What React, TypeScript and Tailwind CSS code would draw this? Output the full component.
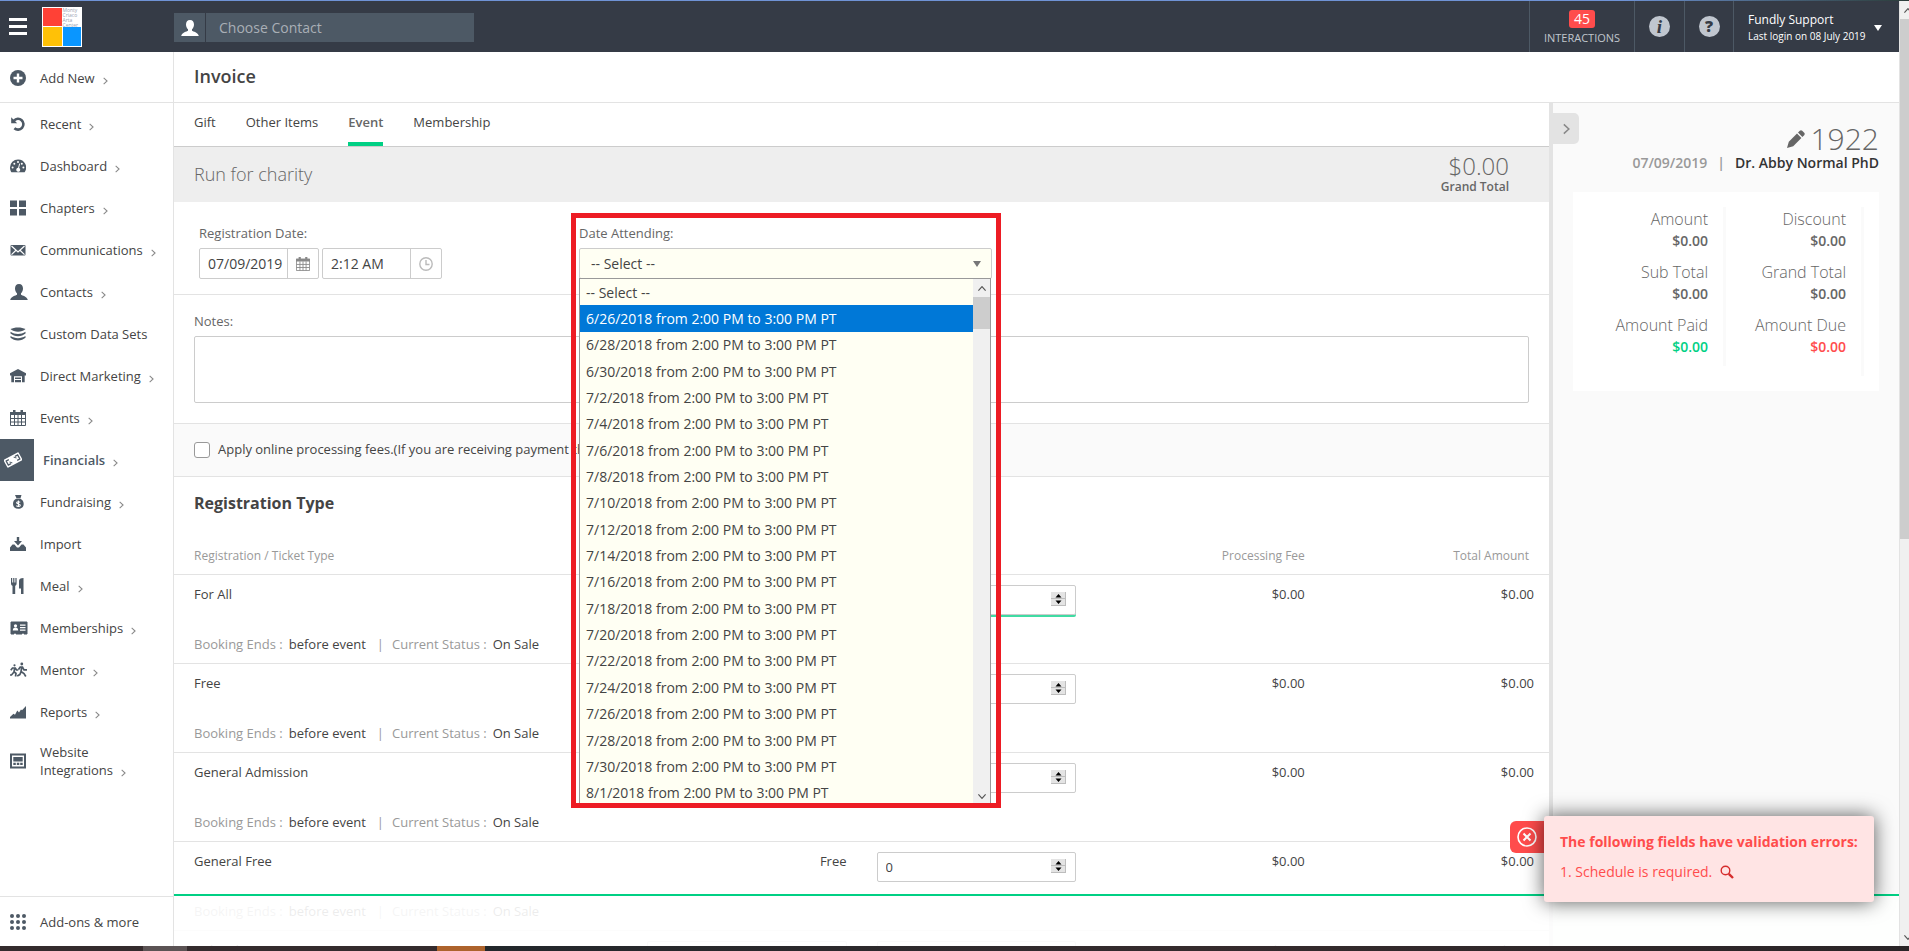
import type { ReactNode } from "react";

type NavItem = {
  label: string;
  icon: ReactNode;
  arrow?: boolean;
  active?: boolean;
};

const NAV_ITEMS: NavItem[] = [
  { label: "Recent", icon: <RecentIcon />, arrow: true },
  { label: "Dashboard", icon: <DashboardIcon />, arrow: true },
  { label: "Chapters", icon: <ChaptersIcon />, arrow: true },
  { label: "Communications", icon: <MailIcon />, arrow: true },
  { label: "Contacts", icon: <PersonIcon className="size-[18px]" />, arrow: true },
  { label: "Custom Data Sets", icon: <LayersIcon /> },
  { label: "Direct Marketing", icon: <HouseIcon />, arrow: true },
  { label: "Events", icon: <CalendarIcon className="size-4" />, arrow: true },
  { label: "Financials", icon: <CashIcon />, arrow: true, active: true },
  { label: "Fundraising", icon: <MoneyBagIcon />, arrow: true },
  { label: "Import", icon: <ImportIcon /> },
  { label: "Meal", icon: <MealIcon />, arrow: true },
  { label: "Memberships", icon: <CardIcon />, arrow: true },
  { label: "Mentor", icon: <MentorIcon />, arrow: true },
  { label: "Reports", icon: <ReportsIcon />, arrow: true },
  { label: "Website Integrations", icon: <WebsiteIcon />, arrow: true },
];

const TABS = ["Gift", "Other Items", "Event", "Membership"];

const SCHEDULE_DAYS = [
  "6/26", "6/28", "6/30", "7/2", "7/4", "7/6", "7/8", "7/10", "7/12", "7/14",
  "7/16", "7/18", "7/20", "7/22", "7/24", "7/26", "7/28", "7/30", "8/1",
];

const TICKETS = [
  { name: "For All", focused: true },
  { name: "Free" },
  { name: "General Admission" },
  { name: "General Free", price: "Free" },
  { name: "Kids Admission", editablePrice: true },
];

const TOTALS = [
  [
    { label: "Amount", color: "text-[#666666]" },
    { label: "Sub Total", color: "text-[#666666]" },
    { label: "Amount Paid", color: "text-[#00d084]" },
  ],
  [
    { label: "Discount", color: "text-[#666666]" },
    { label: "Grand Total", color: "text-[#666666]" },
    { label: "Amount Due", color: "text-[#ff4c4c]" },
  ],
];

function RecentIcon() {
  return (
    <svg viewBox="0 0 16 16" className="size-4" fill="none" stroke="currentColor">
      <path d="M4 4.600A5.400 5.400 0 1 1 4.400 12.200" strokeWidth="2.600" />
      <path d="M1.200 1.200v6h6z" fill="currentColor" stroke="none" />
    </svg>
  );
}

function DashboardIcon() {
  return (
    <svg viewBox="0 0 16 16" className="size-4">
      <path d="M8 1.500a8 8 0 0 0-8 8c0 1.800.5 3.400 1.400 4.700h13.200A8 8 0 0 0 8 1.500z" fill="currentColor" />
      <g fill="#fff">
        <circle cx="2.600" cy="9.600" r="1" />
        <circle cx="4.300" cy="5.700" r="1" />
        <circle cx="8" cy="4" r="1" />
        <circle cx="11.800" cy="5.700" r="1" />
        <circle cx="13.400" cy="9.600" r="1" />
        <path d="M9.200 5.500 10.100 5.800 9.100 10a2 2 0 1 1-1-.2z" />
      </g>
    </svg>
  );
}

function ChaptersIcon() {
  return (
    <svg viewBox="0 0 16 16" className="size-4" fill="currentColor">
      <path d="M0 .5h7v6.500H0zM9 .5h7v6.500H9zM0 9h7v6.500H0zM9 9h7v6.500H9z" />
    </svg>
  );
}

function MailIcon() {
  return (
    <svg viewBox="0 0 16 16" className="size-4">
      <rect x="0.500" y="3" width="15" height="10.500" rx="1" fill="currentColor" />
      <path d="M1.500 4 8 10l6.500-6M1.500 12.600 6 8.300M14.500 12.600 10 8.300" fill="none" stroke="#fff" strokeWidth="1.200" />
    </svg>
  );
}

function PersonIcon({ className }: { className: string }) {
  return (
    <svg viewBox="0 0 18 18" className={className} fill="currentColor">
      <path d="M9 1c2.700 0 4 1.900 4 4.400 0 2-.9 3.800-2 4.800v1.500c1.200 1 6 1.500 6.800 5.300H.2C1 13.200 5.800 12.700 7 11.700v-1.500c-1.100-1-2-2.800-2-4.800C5 2.900 6.300 1 9 1z" />
    </svg>
  );
}

function LayersIcon() {
  return (
    <svg viewBox="0 0 16 16" className="size-4" fill="currentColor">
      <path d="M8 1.500c3 0 5.500.6 7.500 1.600C13.500 4.800 11 5.800 8 5.800S2.500 4.800.5 3.100C2.500 2.100 5 1.500 8 1.500z" />
      <path d="M.5 5.800C3 7.200 5.200 8 8 8s5-.8 7.500-2.200v1.800C13.500 9.200 11 10.200 8 10.200S2.500 9.200.5 7.600zM.5 10C3 11.400 5.200 12.200 8 12.200s5-.8 7.500-2.200v1.800c-2 1.600-4.500 2.600-7.500 2.600S2.500 13.400.5 11.800z" />
    </svg>
  );
}

function HouseIcon() {
  return (
    <svg viewBox="0 0 16 16" className="size-4" fill="currentColor">
      <path d="M8 1 16 5.200V7.500h-1.300v6.700H12V8.300H4v5.900H1.300V7.500H0V5.200z" />
      <path d="M5 9.500h6v1.500H5zM5 12h6v2.200H5z" />
    </svg>
  );
}

function CalendarIcon({ className }: { className: string }) {
  return (
    <svg viewBox="0 0 16 16" className={className}>
      <path d="M.5 2.500h15v13H.5z" fill="none" stroke="currentColor" />
      <path d="M0 2h16v3H0zM3 0h2.500v3H3zM10.500 0H13v3h-2.500z" fill="currentColor" />
      <path d="M4.500 5v10.500M8 5v10.500M11.500 5v10.500M.5 8.500h15M.5 12h15" stroke="currentColor" />
    </svg>
  );
}

function CashIcon() {
  return (
    <svg viewBox="0 0 18 16" className="h-4 w-[18px]">
      <g transform="rotate(-28 9 8)">
        <rect x="0.500" y="3.500" width="17" height="9" rx="1" fill="#fff" />
        <path d="M5.500 5.700H2.500v4.600h3M12.500 5.700h3v4.600h-3" fill="none" stroke="#4d5965" strokeWidth="1.300" />
        <path d="M7 10.300 5 8M11 5.700 13 8" fill="none" stroke="#4d5965" />
      </g>
    </svg>
  );
}

function MoneyBagIcon() {
  return (
    <svg viewBox="0 0 16 16" className="size-4">
      <path d="M5 1h6.500l-1 3.200h-4zM6 4.800h4.500c2 1 3.200 2.800 3.200 5.200 0 3.200-2.200 4.800-5.400 4.800S3 13.200 3 10c0-2.400 1-4.200 3-5.200z" fill="currentColor" />
      <path d="M10.200 8.300C9.500 7.500 6.600 7.400 6.600 8.800c0 1.600 3.700.8 3.700 2.400 0 1.500-3.100 1.400-3.900.4M8.400 6.600v6.400" fill="none" stroke="#fff" strokeWidth="1.100" />
    </svg>
  );
}

function ImportIcon() {
  return (
    <svg viewBox="0 0 16 16" className="size-4" fill="currentColor">
      <path d="M6.800 1h2.400v4H12L8 9.400 4 5h2.800z" />
      <path d="M2.500 8.500h2L7 11.500h2l2.500-3h2l2.500 3V15H0v-3.500z" />
    </svg>
  );
}

function MealIcon() {
  return (
    <svg viewBox="0 0 16 16" className="size-4" fill="currentColor">
      <path d="M1 0h1.200v4.500h1V0h1.200v4.500h1V0h1.200v5.500c0 1.200-.6 2-1.400 2.300V16H2.500V7.800C1.600 7.500 1 6.700 1 5.500zM9 3c0-2 1.300-3 4.500-3v16H11v-5.500H9z" />
    </svg>
  );
}

function CardIcon() {
  return (
    <svg viewBox="0 0 18 14" className="h-3.5 w-[18px]">
      <path d="M1 1h16v12h-3v-1h-2v1H6v-1H4v1H1z" fill="currentColor" stroke="currentColor" strokeLinejoin="round" />
      <circle cx="5.500" cy="4.800" r="1.600" fill="#fff" />
      <path d="M2.800 9.500c0-2 1-3 2.700-3s2.700 1 2.700 3zM10 3.500h5.500v1.200H10zM10 6h5.500v1.200H10zM10 8.500h5.500v1.200H10z" fill="#fff" />
    </svg>
  );
}

function MentorIcon() {
  return (
    <svg viewBox="0 0 18 16" className="h-4 w-[18px]" fill="none" stroke="currentColor" strokeWidth="1.700">
      <circle cx="4.500" cy="3.300" r="1.100" fill="currentColor" stroke="none" />
      <circle cx="11.800" cy="2" r="1.400" fill="currentColor" stroke="none" />
      <path d="M.8 8.300 2.500 6h2.800l1.200 2h1.800M4.600 6.500 4 9.800l2 1.500-.5 3.200M4 10 1.500 13H0M8.500 7.500l1.700-2.500h2.300l1.500 2.800h3M11.700 5.500 11 9.500l3 2 1.800 3M11 9.800l-1.200 2.800-2.600 1.400" />
    </svg>
  );
}

function ReportsIcon() {
  return (
    <svg viewBox="0 0 16 16" className="size-4" fill="currentColor">
      <path d="M0 14.500V13l3.500-3.200 1.500 1L7.300 6.500l1.700 2 2-3 1 .8L16 2v12.500z" />
    </svg>
  );
}

function WebsiteIcon() {
  return (
    <svg viewBox="0 0 16 16" className="size-4" fill="currentColor">
      <path d="M0 .5h16v15H0zM2 2.500v11h12v-11z" fillRule="evenodd" />
      <path d="M3.300 4h9.400v4.500H3.300zM3.300 9.700h2.500v2.300H3.300zM6.800 9.700h2.500v2.300H6.800zM10.200 9.700h2.500v2.300h-2.500z" />
    </svg>
  );
}

function Chevron({ className }: { className: string }) {
  return (
    <svg viewBox="0 0 6 10" className={className} fill="none" stroke="currentColor">
      <path d="M.7 1 5 5 .7 9" strokeWidth="1.300" />
    </svg>
  );
}

function Header() {
  return (
    <header className="flex h-[51px] shrink-0 items-stretch bg-[#353b46] text-white">
      <div className="flex w-[174px] shrink-0 items-center gap-[15px] pl-[9px]">
        <button type="button" aria-label="Menu" className="flex w-[18px] flex-col gap-1">
          <span className="h-[3px] bg-white" />
          <span className="h-[3px] bg-white" />
          <span className="h-[3px] bg-white" />
        </button>
        <div className="grid size-10 grid-cols-2 grid-rows-2 gap-px bg-white p-px">
          <span className="bg-[#ff4136]" />
          <span className="text-[5px] leading-[5px] text-gray-400">
            Monty
            <br />
            Criaco
            <br />
            Arta
            <br />
            Center
          </span>
          <span className="bg-[#ffc107]" />
          <span className="bg-[#0a96ff]" />
        </div>
      </div>
      <div className="mt-3 flex h-[29px] w-[300px] gap-px">
        <span className="flex w-[31px] items-center justify-center bg-[#4d5965]">
          <PersonIcon className="size-[18px]" />
        </span>
        <input
          type="text"
          aria-label="Choose Contact"
          placeholder="Choose Contact"
          className="min-w-0 flex-1 bg-[#4d5965] px-[13px] text-[14px] outline-none placeholder:text-[#a9afb6]"
        />
      </div>
      <div className="ml-auto flex">
        <button type="button" className="flex w-[105px] flex-col items-center border-l border-[#4d5965] pt-[9px]">
          <span className="rounded-[3px] bg-[#ff4c4c] px-[5px] text-[14px] leading-[18px]">45</span>
          <span className="text-[11px] leading-[20px] text-[#c0c6cd]">INTERACTIONS</span>
        </button>
        <button
          type="button"
          aria-label="Information"
          className="flex w-[50px] items-center justify-center border-l border-[#4d5965]"
        >
          <span className="size-[21px] rounded-full bg-[#c0c6cf] font-['Liberation_Serif'] text-[19px] leading-[21px] font-bold text-[#353b46] italic">
            i
          </span>
        </button>
        <button
          type="button"
          aria-label="Help"
          className="flex w-[49px] items-center justify-center border-l border-[#4d5965]"
        >
          <span className="size-[21px] rounded-full bg-[#c0c6cf] text-[16px] leading-[21px] font-extrabold text-[#353b46]">
            ?
          </span>
        </button>
        <button
          type="button"
          className="flex w-[166px] items-center gap-2 border-l border-[#4d5965] pt-0.5 pl-[14px] text-left"
        >
          <span className="flex flex-col">
            <span className="text-[12px] leading-4">Fundly Support</span>
            <span className="text-[10px] leading-4">Last login on 08 July 2019</span>
          </span>
          <svg viewBox="0 0 8 6" className="h-1.5 w-2" fill="#fff">
            <path d="M0 0h8L4 6z" />
          </svg>
        </button>
      </div>
    </header>
  );
}

function SidebarLink({ item }: { item: NavItem }) {
  const wraps = item.label.startsWith("Website");
  return (
    <a
      href="#"
      className={
        "flex items-center " +
        (wraps ? "h-14 " : "h-[42px] ") +
        (item.active ? "font-semibold text-[#4d5965]" : "text-[#444444]")
      }
    >
      {item.active ? (
        <span className="mr-[9px] flex h-full w-[34px] items-center bg-[#4d5965] pl-1">{item.icon}</span>
      ) : (
        <span className="flex w-10 items-center pl-[10px] text-[#4d5965]">{item.icon}</span>
      )}
      <span className={wraps ? "w-[100px]" : "whitespace-nowrap"}>
        {item.label}
        {item.arrow && <Chevron className="ml-2 inline-block h-2 w-[5px] align-[-2px] text-[#888888]" />}
      </span>
    </a>
  );
}

function Sidebar() {
  return (
    <nav className="flex w-[174px] shrink-0 flex-col border-r border-[#e3e3e3] bg-white text-[13px] leading-[18px]">
      <a href="#" className="flex h-[51px] items-center border-b border-[#e3e3e3] pt-0.5 text-[#444444]">
        <span className="flex w-10 pl-[10px] text-[#4d5965]">
          <svg viewBox="0 0 16 16" className="size-4">
            <circle cx="8" cy="8" r="8" fill="currentColor" />
            <path d="M8 3.500v9M3.500 8h9" stroke="#fff" strokeWidth="2.400" />
          </svg>
        </span>
        <span>
          Add New
          <Chevron className="ml-2 inline-block h-2 w-[5px] align-[-2px] text-[#888888]" />
        </span>
      </a>
      {NAV_ITEMS.map((item) => (
        <SidebarLink key={item.label} item={item} />
      ))}
      <a href="#" className="mt-auto flex h-[50px] items-center border-t border-[#e3e3e3] text-[#444444]">
        <span className="flex w-10 pl-[10px] text-[#4d5965]">
          <svg viewBox="0 0 16 16" className="size-4" fill="currentColor">
            {[2, 8, 14].map((y) => [2, 8, 14].map((x) => <circle key={`${x}-${y}`} cx={x} cy={y} r="2" />))}
          </svg>
        </span>
        Add-ons &amp; more
      </a>
    </nav>
  );
}

function DateAttending() {
  return (
    <div className="relative z-10 w-[413px]">
      <label htmlFor="date-attending" className="block text-[13px] leading-5 text-[#666666]">
        Date Attending:
      </label>
      <div className="relative mt-[5px]">
        <select
          id="date-attending"
          className="h-[31px] w-full appearance-none rounded-[2px] border border-[#cccccc] bg-[#fffff3] px-[11px] text-[14px] text-[#444444]"
        >
          <option>-- Select --</option>
        </select>
        <svg viewBox="0 0 8 6" className="pointer-events-none absolute top-[13px] right-[11px] h-1.5 w-2" fill="#777777">
          <path d="M0 0h8L4 6z" />
        </svg>
      </div>

      <div className="absolute top-[55px] left-0 flex h-[525px] w-[calc(100%-1px)] overflow-hidden border-x border-t border-[#999999] bg-[#fffff3]">
        <ul
          role="listbox"
          aria-label="Date Attending"
          className="flex h-[527px] flex-1 flex-col text-[14px] text-[#444444]"
        >
          <li role="option" aria-selected="false" className="flex flex-1 items-center px-1.5">
            -- Select --
          </li>
          {SCHEDULE_DAYS.map((day, i) => (
            <li
              key={day}
              role="option"
              aria-selected={i === 0}
              className={"flex flex-1 items-center px-1.5 " + (i === 0 ? "bg-[#0078d7] text-white" : "")}
            >
              {day}/2018 from 2:00 PM to 3:00 PM PT
            </li>
          ))}
        </ul>
        <div className="flex w-[17px] flex-col items-center bg-[#f0f0f0] text-[#555555]">
          <span className="flex h-[18px] items-center">
            <Chevron className="h-[9px] w-[6px] -rotate-90" />
          </span>
          <span className="h-8 w-full bg-[#cdcdcd]" />
          <span className="mt-auto flex h-[14px] items-center">
            <Chevron className="h-[9px] w-[6px] rotate-90" />
          </span>
        </div>
      </div>

      {/* highlight frame */}
      <div className="pointer-events-none absolute -top-[10px] -left-2 h-[595px] w-[calc(100%+17px)] border-[5px] border-[#ed1c24]" />
    </div>
  );
}

function Spinner() {
  return (
    <svg viewBox="0 0 15 14" className="pointer-events-none absolute top-[7px] right-[10px] h-3.5 w-[15px]">
      <path d="M0 0h15v14H0z" fill="#e4e4e4" />
      <path d="M0 6.500h15M0 13.500h15M14.500 0v14" stroke="#bdbdbd" />
      <path d="M4.500 5.500h6L7.500 2zM4.500 8.500h6l-3 3.500z" fill="#000" />
    </svg>
  );
}

function TicketTable() {
  return (
    <table className="w-full table-fixed border-collapse text-[13px] leading-5 text-[#444444]">
      <thead>
        <tr className="border-b border-[#e3e3e3] text-[12px] text-[#999999]">
          <th className="w-1/3 pt-[17px] pb-2 pl-5 text-left font-normal">Registration / Ticket Type</th>
          <th aria-label="Price" className="w-1/6" />
          <th aria-label="Quantity" className="w-1/6" />
          <th className="w-1/6 px-[15px] pt-[17px] pb-2 text-right font-normal">Processing Fee</th>
          <th className="w-1/6 pt-[17px] pr-5 pb-2 text-right font-normal">Total Amount</th>
        </tr>
      </thead>
      <tbody>
        {TICKETS.map((ticket) => (
          <tr key={ticket.name} className="border-b border-[#e3e3e3] align-top">
            <td className="py-[9px] pl-5">
              <div>{ticket.name}</div>
              <div className="mt-[30px] whitespace-nowrap">
                <span className="text-[#999999]">Booking Ends :</span>
                <span className="ml-1.5">before event</span>
                <span className="mr-2 ml-[11px] text-[#999999]">|</span>
                <span className="text-[#999999]">Current Status :</span>
                <span className="ml-1.5">On Sale</span>
              </div>
            </td>
            <td className="px-[15px] pt-[9px] text-right">
              {ticket.price}
              {ticket.editablePrice && (
                <input
                  type="text"
                  aria-label={`${ticket.name} price`}
                  className="mt-px h-[30px] w-full rounded-[2px] border border-[#cccccc] px-2"
                />
              )}
            </td>
            <td className="px-[15px] pt-[10px]">
              <div
                className={
                  "relative h-[30px] rounded-[2px] " + (ticket.focused ? "shadow-[0_2px_0_0_#40dba3]" : "")
                }
              >
                <input
                  type="number"
                  aria-label={`${ticket.name} quantity`}
                  defaultValue={0}
                  className="h-full w-full [appearance:textfield] rounded-[2px] border border-[#cccccc] px-2 outline-none [&::-webkit-inner-spin-button]:appearance-none"
                />
                <Spinner />
              </div>
            </td>
            <td className="px-[15px] pt-[9px] text-right">$0.00</td>
            <td className="px-[15px] pt-[9px] text-right">$0.00</td>
          </tr>
        ))}
      </tbody>
    </table>
  );
}

function InvoiceForm() {
  return (
    <main className="min-w-0 flex-1 overflow-hidden bg-white">
      <div className="flex h-11 gap-[30px] border-b border-[#cccccc] pl-5 text-[13px]">
        {TABS.map((tab) => (
          <a
            key={tab}
            href="#"
            className={
              "h-[43px] pt-[9px] leading-5 " +
              (tab === "Event" ? "border-b-4 border-[#00d084] font-semibold text-[#666666]" : "text-[#444444]")
            }
          >
            {tab}
          </a>
        ))}
      </div>
      <div className="flex h-[55px] items-center justify-between bg-[#eeeeee] pr-10 pl-5 text-[#666666]">
        <h2 className="text-[18px] font-light">Run for charity</h2>
        <div className="self-start pt-[5px] text-right">
          <div className="text-[24px] leading-[27px] font-light">$0.00</div>
          <div className="text-[12px] leading-4 font-semibold">Grand Total</div>
        </div>
      </div>

      <div className="flex border-b border-[#e3e3e3] pt-[21px] pb-[15px] pl-[25px]">
        <div className="w-[380px] shrink-0">
          <label htmlFor="reg-date" className="block text-[13px] leading-5 text-[#666666]">
            Registration Date:
          </label>
          <div className="mt-[5px] flex gap-[3px] text-[14px] text-[#444444]">
            <div className="flex h-[31px] w-[120px] rounded-[2px] border border-[#cccccc]">
              <input id="reg-date" type="text" defaultValue="07/09/2019" className="w-[87px] pl-2 outline-none" />
              <button
                type="button"
                aria-label="Pick date"
                className="flex flex-1 items-center justify-center border-l border-[#cccccc] text-[#888888]"
              >
                <CalendarIcon className="size-[14px]" />
              </button>
            </div>
            <div className="flex h-[31px] w-[120px] rounded-[2px] border border-[#cccccc]">
              <input
                type="text"
                aria-label="Registration time"
                defaultValue="2:12 AM"
                className="w-[87px] pl-2 outline-none"
              />
              <button
                type="button"
                aria-label="Pick time"
                className="flex flex-1 items-center justify-center border-l border-[#cccccc] text-[#bbbbbb]"
              >
                <svg viewBox="0 0 14 14" className="size-[14px]" fill="none" stroke="currentColor" strokeWidth="1.400">
                  <circle cx="7" cy="7" r="6.200" />
                  <path d="M7 3v4.500h3.500" />
                </svg>
              </button>
            </div>
          </div>
        </div>
        <DateAttending />
      </div>

      <div className="border-b border-[#e3e3e3] px-5 pt-4 pb-5">
        <label htmlFor="notes" className="block text-[13px] leading-5 text-[#666666]">
          Notes:
        </label>
        <textarea
          id="notes"
          className="mt-[5px] block h-[67px] w-full resize-none rounded-[2px] border border-[#cccccc]"
        />
      </div>

      <label className="flex h-[53px] items-center gap-2 border-b border-[#e3e3e3] bg-[#fafafa] px-5 text-[13px] text-[#444444]">
        <input type="checkbox" className="size-4 appearance-none rounded-[3px] border border-[#999999] bg-white" />
        Apply online processing fees.(If you are receiving payment through check)
      </label>

      <h2 className="pt-[14px] pb-[14px] pl-5 text-[16px] leading-6 font-bold text-[#444444]">Registration Type</h2>
      <TicketTable />
    </main>
  );
}

function SummaryPanel() {
  return (
    <aside className="relative w-[350px] shrink-0 border-l-4 border-[#e3e3e3] bg-[#fafafa] px-5 pt-[21px]">
      <button
        type="button"
        aria-label="Collapse summary"
        className="absolute top-[10px] left-0 flex h-[31px] w-[26px] items-center justify-center rounded-r-[5px] bg-[#e3e3e3] text-[#888888]"
      >
        <Chevron className="h-3 w-[7px]" />
      </button>
      <div className="flex items-center justify-end gap-1.5 text-[#666666]">
        <svg viewBox="0 0 18 18" className="size-[18px]" fill="currentColor">
          <path d="M0 18 1.800 11.800 10 3.600l4.400 4.400-8.200 8.200zM11 2.600 12.800.8c.7-.7 1.700-.7 2.400 0l2 2c.7.7.7 1.700 0 2.400L15.400 7z" />
        </svg>
        <span className="text-[30px] leading-[30px] font-light">1922</span>
      </div>
      <div className="flex justify-end gap-[10px] text-[14px] leading-[18px] font-semibold">
        <span className="text-[#999999]">07/09/2019</span>
        <span className="text-[#999999]">|</span>
        <span className="text-[#333333]">Dr. Abby Normal PhD</span>
      </div>
      <div className="mt-5 flex h-[199px] bg-white pt-[15px] pr-[15px]">
        {TOTALS.map((column, i) => (
          <div
            key={column[0].label}
            className={
              "border-r-[3px] border-[#fafafa] pr-[15px] text-right " +
              (i === 0 ? "h-[159px] w-[153px]" : "h-[169px] flex-1")
            }
          >
            {column.map(({ label, color }) => (
              <div key={label} className="mb-[9px]">
                <div className="text-[16px] leading-6 font-light text-[#666666]">{label}</div>
                <div className={"text-[14px] leading-5 font-semibold " + color}>$0.00</div>
              </div>
            ))}
          </div>
        ))}
      </div>
    </aside>
  );
}

function ValidationToast() {
  return (
    <div role="alert" className="absolute right-[25px] bottom-[44px] z-30 flex items-start">
      <span className="mt-[5px] flex h-8 w-[34px] items-center justify-center rounded-l-[6px] bg-[#ff4c4c]">
        <svg viewBox="0 0 20 20" className="size-5" fill="none" stroke="#fff" strokeWidth="1.600">
          <circle cx="10" cy="10" r="9" />
          <path d="m6.500 6.500 7 7M13.500 6.500l-7 7" strokeWidth="2" />
        </svg>
      </span>
      <div className="h-[86px] w-[330px] rounded-[3px] bg-[#ffe4e4] px-4 pt-4 text-[14px] leading-5 text-[#ff4c4c] shadow-[0_0_20px_rgba(0,0,0,0.65)]">
        <p className="font-bold whitespace-nowrap">The following fields have validation errors:</p>
        <p className="mt-[10px] flex items-center gap-2">
          1. Schedule is required.
          <svg viewBox="0 0 14 14" className="size-[14px]" fill="none" stroke="#d62c2c">
            <circle cx="5.500" cy="5.500" r="4.300" strokeWidth="1.400" />
            <path d="m8.800 8.800 4.200 4.200" strokeWidth="2.400" />
          </svg>
        </p>
      </div>
    </div>
  );
}

function PageScrollbar() {
  return (
    <div className="flex w-[10px] shrink-0 flex-col overflow-hidden border-l border-[#e3e3e3] bg-[#f0f0f0] text-[#555555]">
      <span className="flex h-[18px] shrink-0 items-center pl-[5px]">
        <Chevron className="h-[9px] w-[6px] shrink-0 -rotate-90" />
      </span>
      <span className="h-[55%] bg-[#cdcdcd]" />
      <span className="mt-auto flex h-[17px] shrink-0 items-center pl-[5px]">
        <Chevron className="h-[9px] w-[6px] shrink-0 rotate-90" />
      </span>
    </div>
  );
}

export default function App() {
  return (
    <div className="flex h-screen flex-col overflow-hidden bg-white font-['Open_Sans',sans-serif]">
      <div className="h-px shrink-0 bg-gradient-to-r from-[#6f93d6] from-85% to-[#2c3d3a]" />
      <div className="flex min-h-0 flex-1">
        <div className="relative flex min-w-0 flex-1 flex-col">
          <Header />
          <div className="flex min-h-0 flex-1">
            <Sidebar />
            <div className="relative flex min-w-0 flex-1 flex-col">
              <div className="flex h-[51px] shrink-0 items-center border-b border-[#e3e3e3] pb-0.5 pl-5">
                <h1 className="text-[18px] font-semibold text-[#444444]">Invoice</h1>
              </div>
              <div className="flex min-h-0 flex-1">
                <InvoiceForm />
                <SummaryPanel />
              </div>
              <div className="absolute inset-x-0 bottom-0 z-20 h-[52px] border-t-2 border-[#00d084] bg-white/90 bg-clip-padding" />
            </div>
          </div>
          <ValidationToast />
        </div>
        <PageScrollbar />
      </div>
      <div className="flex h-[5px] shrink-0 bg-[#342b2d]">
        <span className="ml-[143px] w-11 bg-[#5b5354]" />
        <span className="ml-[250px] w-12 bg-[#ad632c]" />
        <span className="flex-1 bg-gradient-to-r from-[#22272b] via-[#352b2d] to-[#2a2527]" />
      </div>
    </div>
  );
}
